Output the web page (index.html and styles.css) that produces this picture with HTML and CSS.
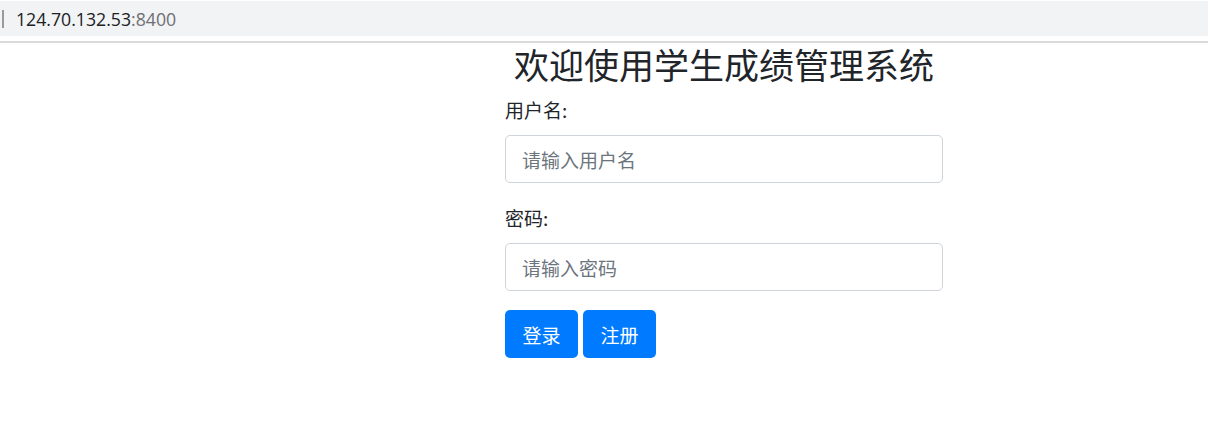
FILE: index.html
```html
<!DOCTYPE html>
<html lang="zh">
<head>
<meta charset="utf-8">
<title>学生成绩管理系统</title>
<link rel="stylesheet" href="styles.css">
</head>
<body>
<div class="chrome">
  <div class="addr">
    <span class="caret"></span>
    <span class="host">124.70.132.53</span><span class="port">:8400</span>
  </div>
  <div class="rule"></div>
</div>
<main class="page">
  <form class="login">
    <h3 class="title">欢迎使用学生成绩管理系统</h3>
    <div class="group">
      <label class="lbl" for="u">用户名:</label>
      <input class="field" id="u" type="text" placeholder="请输入用户名">
    </div>
    <div class="group last">
      <label class="lbl" for="p">密码:</label>
      <input class="field" id="p" type="password" placeholder="请输入密码">
    </div>
    <div class="actions">
      <button class="btn" type="button">登录</button>
      <button class="btn" type="button">注册</button>
    </div>
  </form>
</main>
</body>
</html>
```
FILE: styles.css
```css
* { box-sizing: border-box; }
html, body { margin: 0; padding: 0; background: #fff; }
body {
  font-family: "Noto Sans CJK SC", "Noto Sans", sans-serif;
  color: #212529;
}
.chrome { padding-top: 1px; }
.addr {
  height: 35px;
  background: #f1f3f4;
  display: flex;
  align-items: center;
  padding-left: 2px;
  font-family: "Open Sans", "Liberation Sans", sans-serif;
  font-size: 17.7px;
  color: #202124;
}
.caret {
  width: 2px;
  height: 18px;
  background: #9a9a9a;
  margin-right: 12px;
}
.port { color: #6e6e73; }
.rule {
  margin-top: 5px;
  height: 2px;
  background: #dadada;
}
.page { padding-left: 505px; }
.login { width: 438px; }
.title {
  margin: 0 0 10px;
  font-size: 35px;
  font-weight: 400;
  line-height: 42px;
  text-align: center;
}
.group { margin-bottom: 20px; display: flex; flex-direction: column; }
.group.last { margin-bottom: 19px; }
.lbl {
  font-size: 19px;
  line-height: 30px;
  margin-bottom: 10px;
  display: block;
}
.field {
  height: 48px;
  width: 100%;
  border: 1px solid #ced4da;
  border-radius: 5px;
  padding: 0 16px;
  font-family: inherit;
  font-size: 19px;
  color: #495057;
  outline: none;
}
.field::placeholder { color: #6c757d; }
.actions { display: flex; gap: 5px; }
.btn {
  width: 73px;
  height: 48px;
  border: 0;
  border-radius: 5px;
  background: #007bff;
  color: #fff;
  font-family: inherit;
  font-size: 19px;
  padding: 0;
}
```
